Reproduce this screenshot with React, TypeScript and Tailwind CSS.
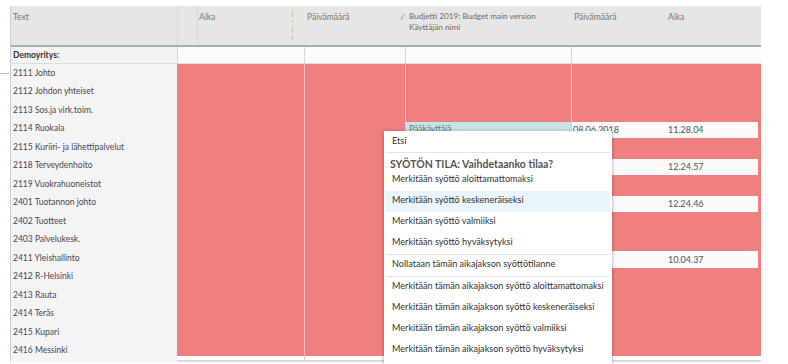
const rows = [
  "2111 Johto",
  "2112 Johdon yhteiset",
  "2113 Sos.ja virk.toim.",
  "2114 Ruokala",
  "2115 Kuriiri- ja lähettipalvelut",
  "2118 Terveydenhoito",
  "2119 Vuokrahuoneistot",
  "2401 Tuotannon johto",
  "2402 Tuotteet",
  "2403 Palvelukesk.",
  "2411 Yleishallinto",
  "2412 R-Helsinki",
  "2413 Rauta",
  "2414 Teräs",
  "2415 Kupari",
  "2416 Messinki",
];

// rows that have an entry filled in: index -> time
const filled: Record<number, string> = {
  3: "11.28.04",
  5: "12.24.57",
  7: "12.24.46",
  10: "10.04.37",
};

const menuGroups = [
  ["Merkitään syöttö aloittamattomaksi", "Merkitään syöttö keskeneräiseksi", "Merkitään syöttö valmiiksi", "Merkitään syöttö hyväksytyksi"],
  ["Nollataan tämän aikajakson syöttötilanne"],
  [
    "Merkitään tämän aikajakson syöttö aloittamattomaksi",
    "Merkitään tämän aikajakson syöttö keskeneräiseksi",
    "Merkitään tämän aikajakson syöttö valmiiksi",
    "Merkitään tämän aikajakson syöttö hyväksytyksi",
  ],
];

function ContextMenu() {
  return (
    <div className="absolute left-[384px] top-[131px] w-[228px] h-[240px] bg-white shadow-[0_1px_4px_rgba(0,0,0,0.35)] text-[9.1px] text-[#333] px-[2px] whitespace-nowrap">
      <div className="h-[21px] flex items-center pl-[6px] pb-[2px]">Etsi</div>
      <div className="h-px bg-[#e3e3e3]" />
      <div className="h-[17px] pt-[6px] pl-[4px] leading-none font-bold text-[#555] text-[10.5px]">
        SYÖTÖN TILA: Vaihdetaanko tilaa?
      </div>
      {menuGroups.map((group, gi) => (
        <div key={gi}>
          {gi > 0 && <div className="h-px bg-[#e3e3e3]" />}
          {group.map((item) => (
            <div
              key={item}
              className={`h-[21px] flex items-center pl-[6px] pb-[4px] ${
                item === "Merkitään syöttö keskeneräiseksi" ? "bg-[#e9f5fb]" : ""
              }`}
            >
              {item}
            </div>
          ))}
        </div>
      ))}
    </div>
  );
}

function HeaderMarker() {
  return (
    <div className="flex flex-col gap-[3px] pt-[4px]">
      <div className="w-px h-[7px] bg-[#d8c3a8]" />
      <div className="w-px h-[3px] bg-[#d8c3a8]" />
      <div className="w-px h-[7px] bg-[#d8c3a8]" />
      <div className="w-px h-[4px] bg-[#c8b4c8]" />
    </div>
  );
}

export default function App() {
  return (
    <div
      className="relative w-[788px] h-[364px] overflow-hidden bg-white pt-[6px] pl-[10px] text-[#444]"
      style={{ fontFamily: "Lato, 'Open Sans', sans-serif" }}
    >
      <div className="absolute left-0 top-[73px] w-[9px] h-px bg-[#bbb]" />
      <div className="w-[751px] border-l border-[#cfcfcf]">
        {/* header */}
        <div className="flex h-[41px] bg-[#e6e6e4] border-b-2 border-[#a3b0b3] text-[8.5px] text-[#777]">
          <div className="w-[166px] pl-[2px] pt-[5px]">Text</div>
          <div className="w-[20px] border-l border-[#d9d9d7]" />
          <div className="w-[107px] border-l border-[#d9d9d7] flex pl-[1px] pt-[5px]">
            <span className="flex-1">Aika</span>
            <div className="mr-[11px] -mt-[5px]">
              <HeaderMarker />
            </div>
          </div>
          <div className="w-[101px] flex pl-[3px] pt-[5px]">
            <span className="flex-1">Päivämäärä</span>
            <span className="text-[8px] text-[#666] mr-[1px] italic">/</span>
          </div>
          <div className="w-[166px] pl-[4px] pt-[5px] leading-[11px] text-[#6a6a6a] text-[8.2px]">
            Budjetti 2019: Budget main version
            <br />
            Käyttäjän nimi
          </div>
          <div className="w-[94px] pl-[3px] pt-[5px]">Päivämäärä</div>
          <div className="flex-1 pl-[3px] pt-[5px]">Aika</div>
        </div>

        {/* company row */}
        <div className="flex h-[17px] text-[8.5px] border-b border-[#dedede]">
          <div className="w-[166px] bg-[#f3f3f3] pl-[2px] flex items-center font-bold text-[#333]">Demoyritys:</div>
          <div className="w-[127px] border-l border-[#d6d6d6] bg-[#fbfbfb]" />
          <div className="w-[101px] border-l border-[#d6d6d6] bg-[#fbfbfb]" />
          <div className="w-[166px] border-l border-[#d6d6d6] bg-[#fbfbfb]" />
          <div className="flex-1 border-l border-[#d6d6d6] bg-[#fbfbfb]" />
        </div>

        {/* data rows */}
        <div className="flex">
          <div className="w-[166px] bg-[#f4f4f4] text-[8.5px]">
            {rows.map((r) => (
              <div key={r} className="h-[18.5px] pl-[2px] flex items-center text-[#4a4552]">
                {r}
              </div>
            ))}
          </div>
          <div className="flex-1 h-[292px] bg-[#f08080] flex flex-col">
            {rows.map((r, i) => (
              <div key={r} className="h-[18.5px] flex shrink-0">
                <div className="w-[127px]" />
                <div className="w-[101px] border-l border-[#f7c0c0]" />
                <div className="w-[166px] border-l border-[#f7c0c0] flex">
                  {filled[i] && (
                    <div className="flex-1 bg-[#c5e4e6] mt-[2px] pl-[3px] text-[8.5px] text-[#5c7a80] flex items-center">
                      {i === 3 ? "Pääkäyttäjä" : ""}
                    </div>
                  )}
                </div>
                <div className="flex-1 border-l border-[#f7c0c0] flex pr-[3px]">
                  {filled[i] && (
                    <div className="flex-1 flex bg-[#fafafa] mt-[2px] text-[9px] text-[#555] items-center">
                      <span className="w-[96px] pl-[1px]">{i === 3 ? "08.06.2018" : ""}</span>
                      <span>{filled[i]}</span>
                    </div>
                  )}
                </div>
              </div>
            ))}
          </div>
        </div>
        <div className="flex h-[2px]">
          <div className="w-[166px] bg-[#f4f4f4]" />
          <div className="flex-1 bg-[#dcdcdc]" />
        </div>
      </div>
      <ContextMenu />
    </div>
  );
}
